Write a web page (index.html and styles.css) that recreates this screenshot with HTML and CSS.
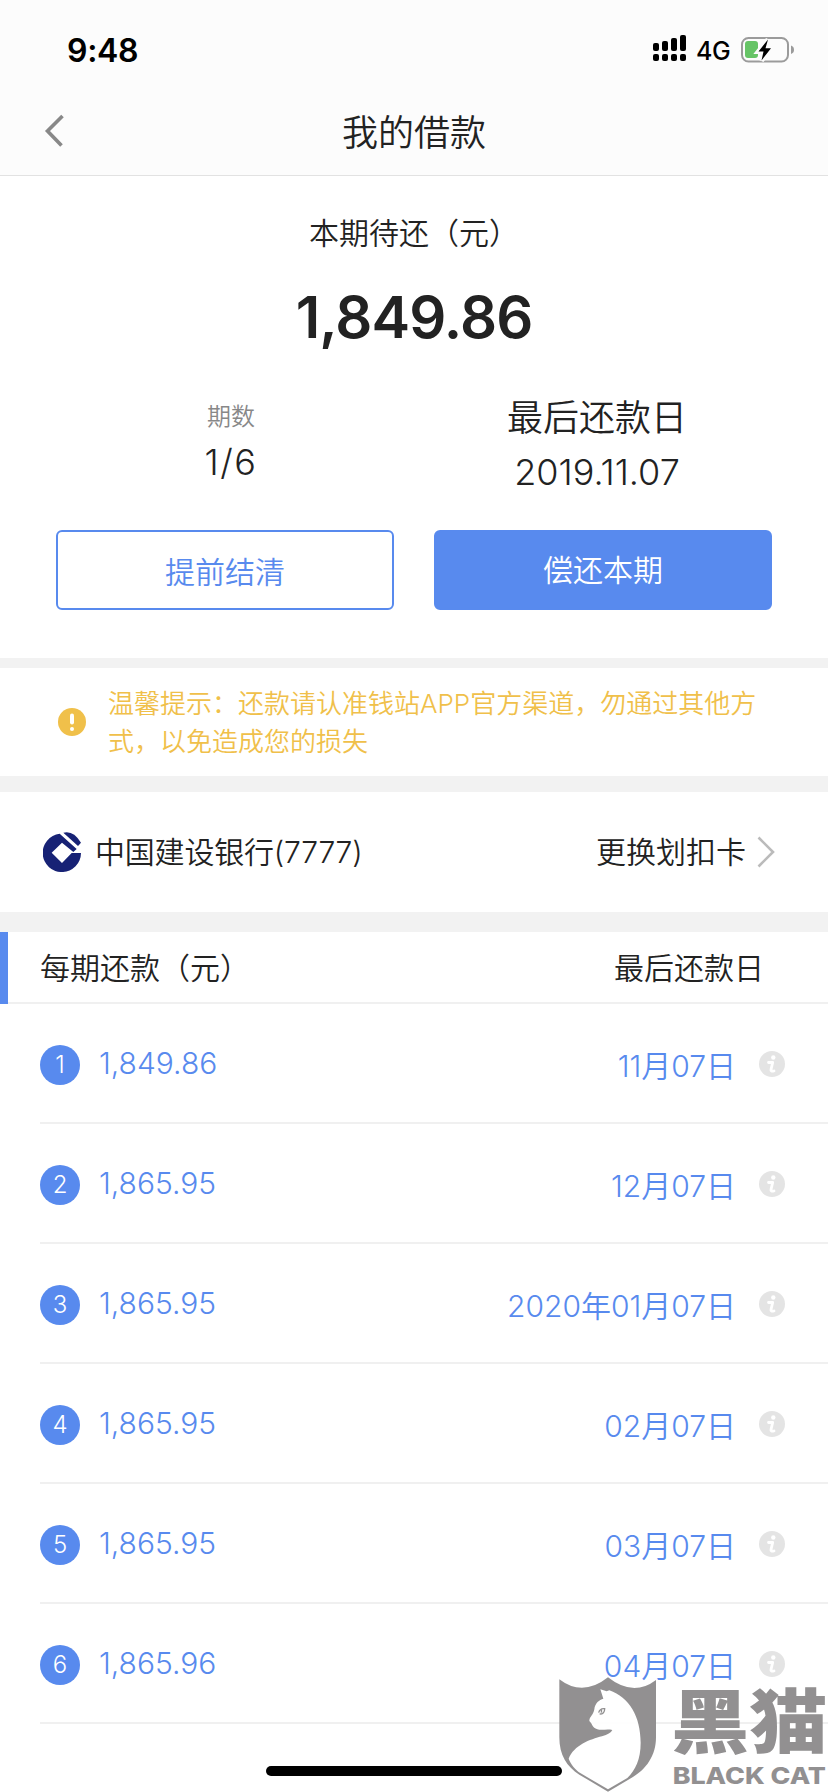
FILE: index.html
```html
<!DOCTYPE html>
<html lang="zh-CN">
<head>
    <meta charset="UTF-8">
    <meta name="viewport" content="width=device-width, initial-scale=1.0">
    <title>我的借款</title>
    <link rel="stylesheet" href="styles.css">
</head>
<body>
    <div class="header">
        <div class="status-bar">
            <span class="status-time">9:48</span>
            <div class="status-right">
                <svg class="signal" width="34" height="28" viewBox="0 0 34 28">
                    <rect x="0" y="8" width="6" height="8" rx="2"/>
                    <rect x="9" y="6" width="6" height="10" rx="2"/>
                    <rect x="18" y="3" width="6" height="13" rx="2"/>
                    <rect x="27" y="0" width="6" height="16" rx="2"/>
                    <rect x="0" y="19" width="6" height="7" rx="2"/>
                    <rect x="9" y="19" width="6" height="7" rx="2"/>
                    <rect x="18" y="19" width="6" height="7" rx="2"/>
                    <rect x="27" y="19" width="6" height="7" rx="2"/>
                </svg>
                <span class="network">4G</span>
                <svg class="battery" width="54" height="26" viewBox="0 0 54 26">
                    <rect x="1" y="1" width="46" height="23.5" rx="6.5" fill="none" stroke="#9b9b9b" stroke-width="2"/>
                    <path d="M50 8.5q3 1 3 4.2t-3 4.3z" fill="#9b9b9b"/>
                    <rect x="4" y="4" width="13" height="17" rx="3" fill="#66c466"/>
                    <path d="M27 2.5L17.5 14.5h5L20.5 23.5 30 11.2h-5.5z" fill="#000" stroke="#fcfcfc" stroke-width="5" paint-order="stroke"/>
                </svg>
            </div>
        </div>
        <div class="nav-bar">
            <svg class="back" width="22" height="34" viewBox="0 0 22 34">
                <path d="M18.500 2L3.500 17l14 14.500" fill="none" stroke="#888" stroke-width="3.600"/>
            </svg>
            <h1>我的借款</h1>
        </div>
    </div>

    <div class="summary">
        <p class="summary-label">本期待还（元）</p>
        <p class="summary-amount">1,849.86</p>
        <div class="summary-info">
            <div class="info-item">
                <p class="info-label">期数</p>
                <p class="info-value info-period">1/6</p>
            </div>
            <div class="info-item">
                <p class="info-title">最后还款日</p>
                <p class="info-value">2019.11.07</p>
            </div>
        </div>
        <div class="buttons">
            <button class="btn btn-outline">提前结清</button>
            <button class="btn btn-primary">偿还本期</button>
        </div>
    </div>

    <div class="notice">
        <svg width="28" height="28" viewBox="0 0 28 28">
            <circle cx="14" cy="14" r="14" fill="#f0c04a"/>
            <path d="M14 7.500v7" stroke="#fff" stroke-width="4" stroke-linecap="round"/>
            <circle cx="14" cy="21" r="2" fill="#fff"/>
        </svg>
        <p>温馨提示：还款请认准钱站APP官方渠道，勿通过其他方式，以免造成您的损失</p>
    </div>

    <div class="bank">
        <svg class="bank-logo" width="38" height="40" viewBox="0 0 114 120">
            <path d="M50 5.500A57.500 57.500 0 1 0 114 63H86L57 93 26 62 57 32 91 60 101 51z" fill="#172275"/>
            <path d="M61 2Q91-6 114 32L105 42z" fill="#172275"/>
        </svg>
        <span class="bank-name">中国建设银行(7777)</span>
        <span class="bank-change">更换划扣卡</span>
        <svg class="arrow" width="18" height="32" viewBox="0 0 18 32">
            <path d="M1.500 1.500L16 16 1.500 30.500" fill="none" stroke="#bbb" stroke-width="2.600"/>
        </svg>
    </div>

    <div class="list-head">
        <span>每期还款（元）</span>
        <span>最后还款日</span>
    </div>
    <!-- 还款计划 -->
    <ul class="list" id="planList"></ul>

    <div class="home-bar"></div>

    <!-- 水印 -->
    <svg class="watermark" width="288" height="172" viewBox="0 0 864 516">
        <path d="M58 178Q128 232 204 172Q280 232 348 180V352C348 405 320 450 270 476L204 515 118 464C80 440 58 405 58 352z" fill="#8f8d8e"/>
        <path d="M181 208L200 214 208 211C268 232 302 290 302 368C302 418 286 450 262 474L204 508 122 460C105 449 92 432 86 416C102 376 150 358 186 349C203 344 213 338 217 330C200 326 186 332 172 328C156 323 158 312 148 303C148 290 160 286 163 268C165 248 178 240 190 236z" fill="#fff"/>
        <path d="M176 278q4-14 18-12q0 16-15 16M183 268q4 5 0 10" fill="none" stroke="#8f8d8e" stroke-width="4"/>
        <text class="mark-cn" x="393" y="384" textLength="470" lengthAdjust="spacingAndGlyphs">黑猫</text>
        <text class="mark-en" x="398" y="493" textLength="460" lengthAdjust="spacingAndGlyphs">BLACK CAT</text>
    </svg>

    <script>
        const plans = [
            { amount: '1,849.86', date: '11月07日' },
            { amount: '1,865.95', date: '12月07日' },
            { amount: '1,865.95', date: '2020年01月07日' },
            { amount: '1,865.95', date: '02月07日' },
            { amount: '1,865.95', date: '03月07日' },
            { amount: '1,865.96', date: '04月07日' }
        ];

        document.getElementById('planList').innerHTML = plans.map((item, i) => `
            <li class="list-item">
                <span class="num">${i + 1}</span>
                <span class="amount">${item.amount}</span>
                <span class="date">${item.date}</span>
                <svg class="info-icon" width="26" height="26" viewBox="0 0 26 26">
                    <circle cx="13" cy="13" r="13" fill="#e4e4e4"/>
                    <circle cx="14.300" cy="6.500" r="2.200" fill="#fff"/>
                    <path d="M9.500 11.500h4.200L12 18.500q-.5 2.200 3 1.500" fill="none" stroke="#fff" stroke-width="2.800" stroke-linecap="round" stroke-linejoin="round"/>
                </svg>
            </li>
        `).join('');
    </script>
</body>
</html>
```

FILE: styles.css
```css
* {
    box-sizing: border-box;
}

body {
    font-family: Inter, "Noto Sans CJK SC", sans-serif;
    font-weight: 350;
    font-size: 30px;
    color: #222;
    margin: 0;
    background-color: #fff;
    height: 1792px;
    position: relative;
    overflow: hidden;
}

p, h1, ul {
    margin: 0;
    padding: 0;
}

.header {
    height: 176px;
    background-color: #fcfcfc;
    border-bottom: 1px solid #e2e2e2;
}

.status-bar {
    height: 88px;
    padding: 12px 33px 0 67px;
    display: flex;
    justify-content: space-between;
    align-items: center;
    color: #000;
}

.status-time {
    font-size: 32px;
    font-weight: 600;
    letter-spacing: -0.3px;
}

.status-right {
    display: flex;
    align-items: center;
}

.signal {
    margin-top: -3px;
}

.network {
    font-size: 25px;
    font-weight: 500;
    width: 36px;
    margin: 1px 9px 0;
    letter-spacing: -0.3px;
}

.nav-bar {
    height: 87px;
    padding: 0 44px;
    display: flex;
    align-items: center;
}

.back {
    margin-top: -1px;
}

.nav-bar h1 {
    flex: 1;
    margin-right: 22px;
    padding-bottom: 4px;
    text-align: center;
    font-size: 36px;
    font-weight: 350;
}

.summary {
    height: 482px;
    padding: 34px 56px 0;
    text-align: center;
}

.summary-label {
    line-height: 47px;
}

.summary-amount {
    font-size: 58px;
    font-weight: 600;
    line-height: 70px;
    margin-top: 25px;
    letter-spacing: -0.9px;
}

.summary-info {
    display: flex;
    height: 140px;
    margin: 38px -8px 0;
}

.info-item {
    flex: 1;
}

.info-label {
    font-size: 24px;
    line-height: 36px;
    margin-top: 9px;
    color: #888;
}

.info-title {
    font-size: 36px;
    line-height: 54px;
    margin-top: 1px;
}

.info-value {
    font-size: 36px;
    line-height: 54px;
}

.info-period {
    letter-spacing: 1.5px;
}

.buttons {
    display: flex;
    gap: 40px;
}

.btn {
    flex: 1;
    height: 80px;
    font: inherit;
    border-radius: 6px;
    border: 2px solid #588aee;
}

.btn-outline {
    background-color: #fff;
    color: #588aee;
}

.btn-primary {
    background-color: #588aee;
    color: #fff;
    padding-bottom: 5px;
}

.notice {
    height: 134px;
    border-top: 10px solid #f2f2f2;
    border-bottom: 16px solid #f2f2f2;
    padding-left: 58px;
    display: flex;
    align-items: center;
    gap: 22px;
    color: #f0c04a;
}

.notice p {
    width: 655px;
    font-size: 26px;
    line-height: 38px;
    padding-top: 1px;
}

.bank {
    height: 140px;
    border-bottom: 20px solid #f2f2f2;
    padding: 0 53px 0 43px;
    display: flex;
    align-items: center;
}

.bank-name {
    margin-left: 14px;
    padding-bottom: 4px;
    letter-spacing: -0.2px;
}

.bank-change {
    margin-left: auto;
    margin-right: 11px;
    padding-bottom: 4px;
}

.list-head {
    height: 72px;
    padding: 0 64px 4px 32px;
    border-left: 8px solid #588aee;
    box-shadow: inset 0 -2px #f0f0f0;
    display: flex;
    justify-content: space-between;
    align-items: center;
}

.list {
    list-style: none;
    margin-left: 40px;
    color: #588aee;
}

.list-item {
    height: 120px;
    padding: 4px 43px 0 0;
    border-bottom: 2px solid #f0f0f0;
    display: flex;
    align-items: center;
}

.num {
    width: 40px;
    height: 40px;
    line-height: 40px;
    border-radius: 50%;
    background-color: #588aee;
    color: #fff;
    font-size: 24px;
    text-align: center;
}

.amount {
    margin: -5px 0 0 19px;
}

.date {
    margin-left: auto;
    margin-right: 23px;
    padding-bottom: 3px;
}

.info-icon {
    margin-top: -2px;
}

.home-bar {
    width: 296px;
    height: 10px;
    margin: 42px auto 0;
    border-radius: 5px;
    background-color: #000;
}

.watermark {
    position: absolute;
    right: 0;
    bottom: 0;
    opacity: 0.97;
}

.mark-cn {
    font: 900 210px "Noto Sans CJK SC", sans-serif;
    fill: #8f8d8e;
}

.mark-en {
    font: 800 68px Inter, sans-serif;
    fill: #8f8d8e;
}
```
